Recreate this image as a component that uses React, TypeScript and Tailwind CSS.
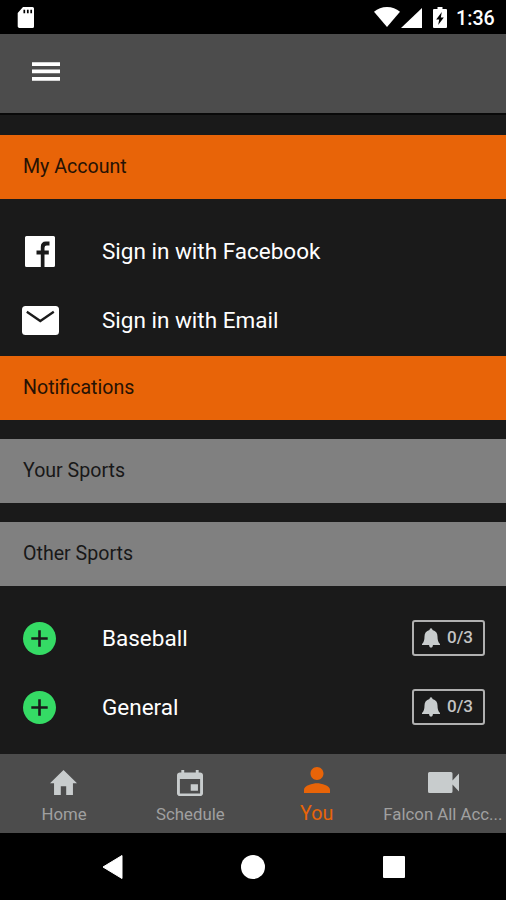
import type { ReactNode } from "react";
import clsx from "clsx";

interface IconProps {
  viewBox: string;
  className?: string;
  children: ReactNode;
}

/** Glyphs are cropped to their own bounds, so the class sets the drawn size */
const Icon = ({ viewBox, className, children }: IconProps) => (
  <svg
    viewBox={viewBox}
    preserveAspectRatio="none"
    fill="currentColor"
    className={clsx("block shrink-0", className)}
  >
    {children}
  </svg>
);

const MenuIcon = () => (
  <Icon viewBox="0 0 28 20" className="h-5 w-7 text-white">
    <path d="M0 .2h28v3.700H0zM0 7.500h28v3.700H0zM0 15h28v3.700H0z" />
  </Icon>
);

const FacebookIcon = () => (
  <Icon viewBox="0 0 30 31" className="h-[31px] w-[30px] text-white">
    <path d="M1.500 0h27A1.500 1.500 0 0 1 30 1.500v28a1.500 1.500 0 0 1-1.500 1.500H19.500V18.500h4.300v-4h-4.300v-2.700q0-2.300 2.300-2.300H24.500V5.500h-3.600Q15.800 5.500 15.800 11v3.500H11.500v4h4.300V31H1.500A1.500 1.500 0 0 1 0 29.500v-28A1.500 1.500 0 0 1 1.500 0z" />
  </Icon>
);

const MailIcon = () => (
  <Icon viewBox="0 0 37 29" className="h-[29px] w-[37px] text-white">
    <rect width="37" height="29" rx="3.500" />
    <path d="M4.800 5.800l13.500 9.200L31.800 5.800" fill="none" stroke="#1a1a1a" strokeWidth="2.300" />
  </Icon>
);

const PlusIcon = () => (
  <Icon viewBox="0 0 33 33" className="-ml-px size-[33px] text-[#35db65]">
    <circle cx="16.500" cy="16.500" r="16.500" />
    <path d="M8.300 16.500h16.400M16.500 8.300v16.400" stroke="#1a1a1a" strokeWidth="2.600" />
  </Icon>
);

const BellIcon = () => (
  <Icon viewBox="0 0 18 20" className="-mt-px h-5 w-[18px] text-[#c8cccd]">
    <path d="M7.500 2Q7.500 .3 9 .3T10.500 2Q15.500 3.300 15.500 8.500 15.500 14 18 16v1H0v-1Q2.500 14 2.500 8.500 2.500 3.300 7.500 2z" />
    <path d="M7 17h4Q10.800 19.800 9 19.800T7 17z" />
  </Icon>
);

const HomeIcon = () => (
  <Icon viewBox="2 3 20 17" className="-ml-px h-[25px] w-[27px]">
    <path d="M10 20v-6h4v6h5v-8h3L12 3 2 12h3v8z" />
  </Icon>
);

const CalendarIcon = () => (
  <Icon viewBox="3 1 18 20" className="h-[26px] w-[26px]">
    <path d="M17.500 12h-5v5h5v-5zM16 1v2H8V1H6v2H5c-1.110 0-1.990.9-1.990 2L3 19c0 1.100.89 2 2 2h14c1.100 0 2-.9 2-2V5c0-1.100-.9-2-2-2h-1V1h-2zm3 18H5V8h14v11z" />
  </Icon>
);

const PersonIcon = () => (
  <Icon viewBox="4 4 16 16" className="size-[26px]">
    <path d="M12 12c2.210 0 4-1.790 4-4s-1.790-4-4-4-4 1.790-4 4 1.790 4 4 4zm0 2c-2.670 0-8 1.340-8 4v2h16v-2c0-2.660-5.330-4-8-4z" />
  </Icon>
);

const VideoIcon = () => (
  <Icon viewBox="0 0 31 21" className="ml-[2px] h-[21px] w-[31px]">
    <path d="M1.500 0h21.500q1.500 0 1.500 1.500V8.500L31 1.500v18L24.500 12.500v7q0 1.500-1.500 1.500H1.500Q0 21 0 19.500v-18Q0 0 1.500 0z" />
  </Icon>
);

const StatusBar = () => (
  <div className="flex h-[34px] shrink-0 bg-black pl-[17px] pt-[7px] text-white">
    <Icon viewBox="0 0 17 21" className="h-[21px] w-[17px]">
      <path d="M6 0h9.500A1.500 1.500 0 0 1 17 1.500v18a1.500 1.500 0 0 1-1.500 1.500h-13A1.800 1.800 0 0 1 .7 19.500V6z" />
      <path d="M7.300 2.800v3.500M10.800 2.800v3.500M14.200 2.800v3.500" stroke="#000" strokeWidth="1.700" />
    </Icon>
    <Icon viewBox="0 0 26 20" className="ml-[340px] h-5 w-[26px]">
      <path d="M0 4.800Q5.500 0 13 0t13 4.800L13 20z" />
    </Icon>
    <Icon viewBox="0 0 21 20" className="ml-[1px] mt-[1px] h-5 w-[21px]">
      <path d="M21 0v20H0z" />
    </Icon>
    <Icon viewBox="0 0 14 21" className="ml-[11px] h-[21px] w-[14px]">
      <path d="M4.500 0h5v2H13q1 0 1 1v17q0 1-1 1H1q-1 0-1-1V3q0-1 1-1h3.500z" />
      <path d="M8.800 5L3.200 12.500h3L5.200 18l5.600-7.500H7.800z" fill="#000" />
    </Icon>
    <span className="ml-[9px] pt-px text-[19.700px] font-medium leading-[22px]">1:36</span>
  </div>
);

interface SectionProps {
  title: string;
  accent?: boolean;
}

const SectionHeader = ({ title, accent }: SectionProps) => (
  <h2
    className={clsx(
      "flex h-16 items-center pl-[23px] text-[19.600px]",
      accent ? "bg-[#e86408] text-[#261204]" : "bg-[#808080] text-[#181818]"
    )}
  >
    {title}
  </h2>
);

interface RowProps {
  icon: ReactNode;
  label: string;
  count?: string;
}

const Row = ({ icon, label, count }: RowProps) => (
  <div className="flex h-[69px] items-center pr-[21px] text-white">
    <div className="flex w-20 justify-center">{icon}</div>
    <span className="pb-[2px] pl-[22px] text-[22.500px] leading-[34px]">{label}</span>
    {count && (
      <div className="-mt-px ml-auto flex h-9 w-[73px] items-center gap-[7px] rounded-[3px] border-2 border-[#b0b0b0] pl-2 text-[17px] font-medium text-[#c4c4c4]">
        <BellIcon />
        {count}
      </div>
    )}
  </div>
);

const TABS = [
  { label: "Home", icon: <HomeIcon />, active: false },
  { label: "Schedule", icon: <CalendarIcon />, active: false },
  { label: "You", icon: <PersonIcon />, active: true },
  { label: "Falcon All Acc...", icon: <VideoIcon />, active: false },
];

const TabBar = () => (
  <nav className="grid h-[79px] shrink-0 grid-cols-4 bg-[#4c4c4c] pl-px">
    {TABS.map(({ label, icon, active }) => (
      <button
        key={label}
        className={clsx(
          "flex flex-col items-center whitespace-nowrap",
          active ? "text-[#e86408]" : "pt-[3px] text-[#c8cccd]"
        )}
      >
        <span className="flex h-[51px] items-center">{icon}</span>
        <span
          className={clsx(
            "-mt-[3px]",
            active ? "text-[19.700px] leading-6" : "text-[16.800px] leading-[19px] text-[#a0a0a0]"
          )}
        >
          {label}
        </span>
      </button>
    ))}
  </nav>
);

const SystemNav = () => (
  <div className="flex h-[67px] shrink-0 items-center justify-center gap-[118px] bg-black pl-px text-white">
    <Icon viewBox="0 0 21 24" className="h-6 w-[21px]">
      <path d="M20 .5v23L1 12z" stroke="currentColor" strokeLinejoin="round" />
    </Icon>
    <span className="size-6 rounded-full bg-white" />
    <span className="size-[22px] rounded-[1px] bg-white" />
  </div>
);

export default function App() {
  return (
    <div className="flex h-[900px] w-[506px] flex-col overflow-hidden bg-[#1a1a1a] font-[Roboto,sans-serif]">
      <StatusBar />
      <header className="flex h-[81px] shrink-0 items-center border-b-2 border-[#090909] bg-[#4c4c4c] pb-[3px] pl-8">
        <MenuIcon />
      </header>
      <main className="flex-1 pt-5">
        <SectionHeader title="My Account" accent />
        <div className="pb-px pt-[18px]">
          <Row icon={<FacebookIcon />} label="Sign in with Facebook" />
          <Row icon={<MailIcon />} label="Sign in with Email" />
        </div>
        <div className="flex flex-col gap-[19px]">
          <SectionHeader title="Notifications" accent />
          <SectionHeader title="Your Sports" />
          <SectionHeader title="Other Sports" />
        </div>
        <div className="pt-[18px]">
          <Row icon={<PlusIcon />} label="Baseball" count="0/3" />
          <Row icon={<PlusIcon />} label="General" count="0/3" />
        </div>
      </main>
      <TabBar />
      <SystemNav />
    </div>
  );
}
